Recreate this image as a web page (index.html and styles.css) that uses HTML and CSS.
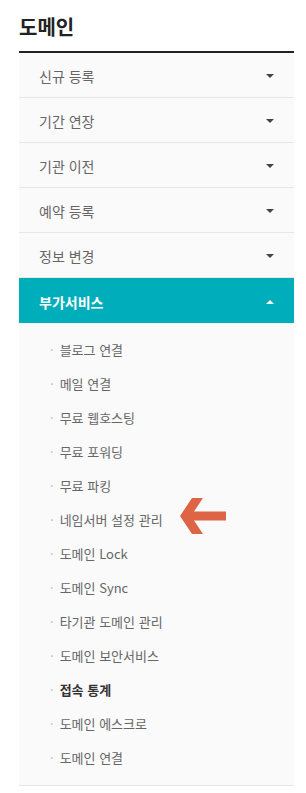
FILE: index.html
```html
<!DOCTYPE html>
<html lang="ko">
<head>
    <meta charset="UTF-8">
    <meta name="viewport" content="width=device-width, initial-scale=1.0">
    <title>도메인</title>
    <link rel="stylesheet" href="styles.css">
</head>
<body>
    <div class="sidebar">
        <h2 class="side-title">도메인</h2>
        <ul class="side-menu">
            <li class="menu-item"><span>신규 등록</span><i class="caret"></i></li>
            <li class="menu-item"><span>기간 연장</span><i class="caret"></i></li>
            <li class="menu-item"><span>기관 이전</span><i class="caret"></i></li>
            <li class="menu-item"><span>예약 등록</span><i class="caret"></i></li>
            <li class="menu-item"><span>정보 변경</span><i class="caret"></i></li>
            <li class="menu-item active"><span>부가서비스</span><i class="caret up"></i></li>
            <li class="sub-wrap">
                <ul class="sub-menu">
                    <li>블로그 연결</li>
                    <li>메일 연결</li>
                    <li>무료 웹호스팅</li>
                    <li>무료 포워딩</li>
                    <li>무료 파킹</li>
                    <li>네임서버 설정 관리
                        <svg class="pointer" width="46" height="37" viewBox="0 0 46 37">
                            <path d="M0 18 L12 0 L23 0 L14 13.5 L46 13.5 L46 22.5 L14 22.5 L23 36 L12 36 Z" fill="#dd6545"/>
                        </svg>
                    </li>
                    <li>도메인 Lock</li>
                    <li>도메인 Sync</li>
                    <li>타기관 도메인 관리</li>
                    <li>도메인 보안서비스</li>
                    <li class="current">접속 통계</li>
                    <li>도메인 에스크로</li>
                    <li>도메인 연결</li>
                </ul>
            </li>
        </ul>
    </div>
</body>
</html>
```

FILE: styles.css
```css
body {
    margin: 0;
    background: #fff;
    font-family: "Noto Sans CJK KR", "Noto Sans", sans-serif;
}
.sidebar {
    width: 275px;
    margin-left: 19px;
}
.side-title {
    margin: 0;
    padding: 11px 0 9px;
    font-size: 20px;
    line-height: 31px;
    font-weight: bold;
    color: #222;
    border-bottom: 2px solid #222;
}
.side-menu {
    list-style: none;
    margin: 0;
    padding: 0;
}
.menu-item {
    display: flex;
    align-items: center;
    justify-content: space-between;
    height: 44px;
    padding: 0 20px;
    background: #fafafa;
    border-bottom: 1px solid #e6e6e6;
    font-size: 14px;
    color: #666;
}
.menu-item span {
    padding-top: 2px;
}
.menu-item.active {
    height: 45px;
    background: #00aebb;
    border-bottom: none;
    color: #fff;
    font-weight: bold;
}
.caret {
    width: 0;
    height: 0;
    border-left: 4.5px solid transparent;
    border-right: 4.5px solid transparent;
    border-top: 4.5px solid #444;
    margin-top: 2px;
}
.caret.up {
    border-top: none;
    border-bottom: 4.5px solid #fff;
}
.sub-wrap {
    background: #fafafa;
    border-bottom: 1px solid #e6e6e6;
}
.sub-menu {
    list-style: none;
    margin: 0;
    padding: 10px 0 10px 31px;
}
.sub-menu li {
    position: relative;
    line-height: 34px;
    font-size: 13px;
    color: #666;
}
.sub-menu li::before {
    content: "·";
    color: #bbb;
    font-weight: normal;
    margin-right: 6px;
}
.sub-menu li.current {
    font-weight: bold;
    color: #333;
}
.pointer {
    position: absolute;
    left: 130px;
    top: -5px;
}
```
